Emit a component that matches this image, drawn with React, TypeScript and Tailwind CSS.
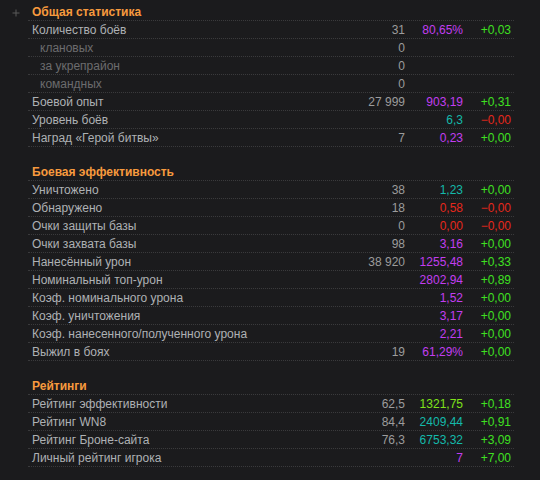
import React from "react";

type Row =
  | { kind: "header"; title: string; plus?: boolean }
  | { kind: "spacer" }
  | {
      kind: "row";
      label: string;
      sub?: boolean;
      count?: string;
      value?: string;
      vc?: string;
      delta?: string;
      dc?: string;
    };

const P = "text-[#c23ef0]";
const T = "text-[#14b9aa]";
const R = "text-[#e5281c]";
const G = "text-[#3fe021]";
const L = "text-[#7fe21a]";

const rows: Row[] = [
  { kind: "header", title: "Общая статистика", plus: true },
  { kind: "row", label: "Количество боёв", count: "31", value: "80,65%", vc: P, delta: "+0,03", dc: G },
  { kind: "row", label: "клановых", sub: true, count: "0" },
  { kind: "row", label: "за укрепрайон", sub: true, count: "0" },
  { kind: "row", label: "командных", sub: true, count: "0" },
  { kind: "row", label: "Боевой опыт", count: "27 999", value: "903,19", vc: P, delta: "+0,31", dc: G },
  { kind: "row", label: "Уровень боёв", value: "6,3", vc: T, delta: "−0,00", dc: R },
  { kind: "row", label: "Наград «Герой битвы»", count: "7", value: "0,23", vc: P, delta: "+0,00", dc: G },
  { kind: "spacer" },
  { kind: "header", title: "Боевая эффективность" },
  { kind: "row", label: "Уничтожено", count: "38", value: "1,23", vc: T, delta: "+0,00", dc: G },
  { kind: "row", label: "Обнаружено", count: "18", value: "0,58", vc: R, delta: "−0,00", dc: R },
  { kind: "row", label: "Очки защиты базы", count: "0", value: "0,00", vc: R, delta: "−0,00", dc: R },
  { kind: "row", label: "Очки захвата базы", count: "98", value: "3,16", vc: P, delta: "+0,00", dc: G },
  { kind: "row", label: "Нанесённый урон", count: "38 920", value: "1255,48", vc: P, delta: "+0,33", dc: G },
  { kind: "row", label: "Номинальный топ-урон", value: "2802,94", vc: P, delta: "+0,89", dc: G },
  { kind: "row", label: "Коэф. номинального урона", value: "1,52", vc: P, delta: "+0,00", dc: G },
  { kind: "row", label: "Коэф. уничтожения", value: "3,17", vc: P, delta: "+0,00", dc: G },
  { kind: "row", label: "Коэф. нанесенного/полученного урона", value: "2,21", vc: P, delta: "+0,00", dc: G },
  { kind: "row", label: "Выжил в боях", count: "19", value: "61,29%", vc: P, delta: "+0,00", dc: G },
  { kind: "spacer" },
  { kind: "header", title: "Рейтинги" },
  { kind: "row", label: "Рейтинг эффективности", count: "62,5", value: "1321,75", vc: L, delta: "+0,18", dc: G },
  { kind: "row", label: "Рейтинг WN8", count: "84,4", value: "2409,44", vc: T, delta: "+0,91", dc: G },
  { kind: "row", label: "Рейтинг Броне-сайта", count: "76,3", value: "6753,32", vc: T, delta: "+3,09", dc: G },
  { kind: "row", label: "Личный рейтинг игрока", value: "7", vc: P, delta: "+7,00", dc: G },
];

function Plus() {
  return (
    <svg width="8" height="8" viewBox="0 0 8 8" className="block">
      <path d="M4 0.5V7.5M0.5 4H7.5" stroke="#5a5a5a" strokeWidth="1" />
    </svg>
  );
}

export default function App() {
  return (
    <div
      className="w-[540px] h-[480px] bg-[#1b1b1d] pt-[3px] text-[12px] leading-[16px]"
      style={{ fontFamily: '"Liberation Sans", Arial, sans-serif' }}
    >
      {rows.map((r, i) => {
        if (r.kind === "spacer") return <div key={i} className="h-[16px]" />;
        if (r.kind === "header")
          return (
            <div key={i} className="flex">
              <div className="w-[28px] flex items-center justify-center pl-[3px] pt-[1px]">
                {r.plus ? <Plus /> : null}
              </div>
              <div className="w-[486px] border-b border-dotted border-[#3a3a3c] pl-[4px] pt-[1px] font-bold text-[#f79a3e]">
                {r.title}
              </div>
            </div>
          );
        return (
          <div key={i} className="flex">
            <div className="w-[28px]" />
            <div className="w-[486px] flex border-b border-dotted border-[#3a3a3c] pr-[3px] pt-[1px]">
              <div
                className={
                  r.sub
                    ? "flex-1 pl-[12px] text-[#6c6c6e]"
                    : "flex-1 pl-[4px] text-[#aeb1b4]"
                }
              >
                {r.label}
              </div>
              <div className="w-[60px] text-right text-[#9c9c9c]">{r.count ?? ""}</div>
              <div className={"w-[58px] text-right " + (r.vc ?? "")}>{r.value ?? ""}</div>
              <div className={"w-[48px] text-right " + (r.dc ?? "")}>{r.delta ?? ""}</div>
            </div>
          </div>
        );
      })}
    </div>
  );
}
